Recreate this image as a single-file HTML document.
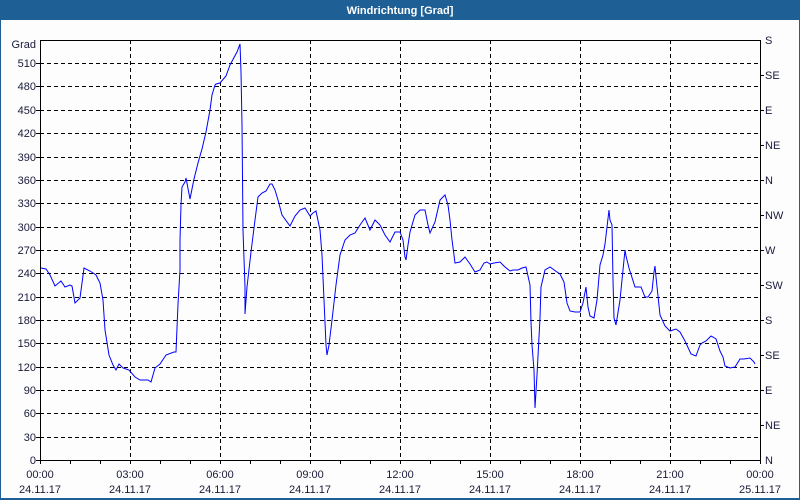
<!DOCTYPE html>
<html><head><meta charset="utf-8"><style>
html,body{margin:0;padding:0;width:800px;height:500px;overflow:hidden;background:#fcfdfc;}
</style></head><body>
<svg width="800" height="500" xmlns="http://www.w3.org/2000/svg" style="display:block;font-family:'Liberation Sans',sans-serif;font-size:11px">
<rect x="0" y="0" width="800" height="500" fill="#fcfdfc"/>
<rect x="0" y="0" width="800" height="20" fill="#1e6096"/>
<rect x="0" y="20" width="1" height="480" fill="#1e6096"/>
<rect x="799" y="20" width="1" height="480" fill="#1e6096"/>
<rect x="0" y="498" width="800" height="2" fill="#1e6096"/>
<text x="400" y="14" fill="#fff" font-weight="bold" text-anchor="middle">Windrichtung [Grad]</text>
<g stroke="#000" stroke-width="1" stroke-dasharray="4,3" fill="none">
<path d="M40 63.5H760M40 86.5H760M40 110.5H760M40 133.5H760M40 157.5H760M40 180.5H760M40 203.5H760M40 227.5H760M40 250.5H760M40 273.5H760M40 297.5H760M40 320.5H760M40 343.5H760M40 367.5H760M40 390.5H760M40 413.5H760M40 437.5H760"/>
<path d="M130.5 40V460M220.5 40V460M310.5 40V460M400.5 40V460M490.5 40V460M580.5 40V460M670.5 40V460"/>
</g>
<g stroke="#000" fill="none">
<path d="M40.5 40.5H760.5V460.5H40.5Z"/>
<path d="M36 63.5H40M36 86.5H40M36 110.5H40M36 133.5H40M36 157.5H40M36 180.5H40M36 203.5H40M36 227.5H40M36 250.5H40M36 273.5H40M36 297.5H40M36 320.5H40M36 343.5H40M36 367.5H40M36 390.5H40M36 413.5H40M36 437.5H40M36 460.5H40"/>
<path d="M70.5 460V464M100.5 460V464M130.5 460V464M160.5 460V464M190.5 460V464M220.5 460V464M250.5 460V464M280.5 460V464M310.5 460V464M340.5 460V464M370.5 460V464M400.5 460V464M430.5 460V464M460.5 460V464M490.5 460V464M520.5 460V464M550.5 460V464M580.5 460V464M610.5 460V464M640.5 460V464M670.5 460V464M700.5 460V464M730.5 460V464M40.5 460V464M760.5 460V464"/>
<path d="M760 75.5H764M760 110.5H764M760 145.5H764M760 180.5H764M760 215.5H764M760 250.5H764M760 285.5H764M760 320.5H764M760 355.5H764M760 390.5H764M760 425.5H764"/>
</g>
<g fill="#1a1a3a" text-anchor="end">
<text x="36" y="48">Grad</text>
<text x="36" y="67">510</text><text x="36" y="90">480</text><text x="36" y="114">450</text><text x="36" y="137">420</text><text x="36" y="161">390</text><text x="36" y="184">360</text><text x="36" y="207">330</text><text x="36" y="231">300</text><text x="36" y="254">270</text><text x="36" y="277">240</text><text x="36" y="301">210</text><text x="36" y="324">180</text><text x="36" y="347">150</text><text x="36" y="371">120</text><text x="36" y="394">90</text><text x="36" y="417">60</text><text x="36" y="441">30</text><text x="36" y="464">0</text>
</g>
<g fill="#1a1a3a">
<text x="765" y="44">S</text><text x="765" y="79">SE</text><text x="765" y="114">E</text><text x="765" y="149">NE</text><text x="765" y="184">N</text><text x="765" y="219">NW</text><text x="765" y="254">W</text><text x="765" y="289">SW</text><text x="765" y="324">S</text><text x="765" y="359">SE</text><text x="765" y="394">E</text><text x="765" y="429">NE</text><text x="765" y="464">N</text>
</g>
<g fill="#1a1a3a" text-anchor="middle">
<text x="40" y="478">00:00</text><text x="130" y="478">03:00</text><text x="220" y="478">06:00</text><text x="310" y="478">09:00</text><text x="400" y="478">12:00</text><text x="490" y="478">15:00</text><text x="580" y="478">18:00</text><text x="670" y="478">21:00</text><text x="760" y="478">00:00</text>
<text x="40" y="493">24.11.17</text><text x="130" y="493">24.11.17</text><text x="220" y="493">24.11.17</text><text x="310" y="493">24.11.17</text><text x="400" y="493">24.11.17</text><text x="490" y="493">24.11.17</text><text x="580" y="493">24.11.17</text><text x="670" y="493">24.11.17</text><text x="760" y="493">25.11.17</text>
</g>
<polyline fill="none" stroke="#0000ff" stroke-width="1" points="41,268 46,269 50,275 55,286 61,281 65,287 70,285 72,286 75,303 80,298 84,268 90,271 96,275 100,283 103,300 105,330 109,355 113,365 116,370 119,364 123,368 129,370 135,377 140,380 148,380 151,382 155,368 160,364 166,355 174,352 176,352 178,304 180,270 180,240 181,205 182,187 185,182 186,178 190,199 194,179 198,163 202,149 206,132 210,110 212,95 215,85 216,84 220,83 226,76 230,65 237,52 240,44 241,72 242,125 243,230 245,287 245,314 247,287 251,252 255,220 258,197 262,193 266,191 270,184 272,184 275,190 278,200 282,215 290,226 295,216 300,210 305,208 310,216 313,213 316,211 320,230 322,255 324,300 326,345 327,355 329,345 332,320 336,285 340,255 345,240 350,235 355,233 360,225 365,218 370,230 375,220 380,225 385,235 390,242 395,232 400,232 403,240 405,257 406,260 408,245 410,232 415,215 420,210 425,210 428,225 430,233 435,222 440,200 445,195 448,205 450,220 452,240 454,255 455,263 460,262 465,257 470,264 475,272 480,270 484,263 487,262 490,264 494,263 500,262 505,267 510,271 513,270 518,270 522,268 526,267 528,276 530,285 531,322 532,345 534,370 535,408 537,375 540,318 541,287 545,270 550,267 557,272 560,274 564,282 567,303 570,311 575,312 580,312 583,303 586,287 588,307 590,316 594,318 597,300 600,265 603,255 605,244 609,210 610,220 612,225 613,280 614,318 616,325 620,300 625,250 626,256 629,268 635,287 641,287 645,297 648,297 652,291 654,272 655,266 656,277 660,315 665,326 670,331 676,329 680,332 685,341 691,354 696,356 700,345 702,343 706,341 711,336 713,337 716,339 720,351 723,357 725,366 730,368 735,367 740,359 744,359 750,358 754,362 755,364"/>
</svg>
</body></html>
